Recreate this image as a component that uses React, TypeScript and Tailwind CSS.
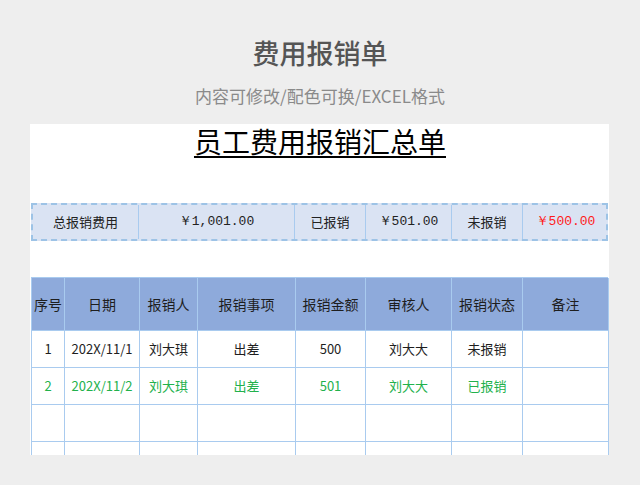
const COLS = 'grid grid-cols-[33px_75px_58px_98px_70px_86px_71px_86px]';

type Row = {
  no: string;
  date: string;
  person: string;
  item: string;
  amount: string;
  auditor: string;
  status: string;
  green?: boolean;
};

const HEAD = ['序号', '日期', '报销人', '报销事项', '报销金额', '审核人', '报销状态', '备注'];

const ROWS: Row[] = [
  { no: '1', date: '202X/11/1', person: '刘大琪', item: '出差', amount: '500', auditor: '刘大大', status: '未报销' },
  { no: '2', date: '202X/11/2', person: '刘大琪', item: '出差', amount: '501', auditor: '刘大大', status: '已报销', green: true },
];

function Cell({ children, className = '' }: { children?: React.ReactNode; className?: string }) {
  return (
    <div className={`flex items-center justify-center border-r border-b border-[#a9cbef] ${className}`}>
      {children}
    </div>
  );
}

export default function App() {
  return (
    <div
      className="flex h-[485px] w-[640px] flex-col items-center overflow-hidden bg-[#eeeeee]"
      style={{ fontFamily: '"Noto Sans CJK SC", "Noto Sans", sans-serif' }}
    >
      <h1 className="mt-[35px] text-[27px] leading-[36px] font-medium text-[#555555]">费用报销单</h1>
      <p className="mt-[14px] text-[17px] leading-[22px] text-[#8a8a8a]">内容可修改/配色可换/EXCEL格式</p>

      <div className="mt-[17px] ml-[30px] h-[331px] w-[579px] self-start overflow-hidden bg-white pl-px">
        {/* Sheet title */}
        <div className="flex h-[79px] justify-center pt-[1px]">
          <span className="text-[28px] leading-[32px] text-black underline decoration-[2px] underline-offset-[3px]">
            员工费用报销汇总单
          </span>
        </div>

        {/* Summary band */}
        <div className="grid h-[38px] w-[577px] grid-cols-[106px_156px_71px_86px_71px_85px] border-2 border-dashed border-[#9dc3e6] bg-[#dae3f3] text-[13px] text-[#222]">
          <div className="flex items-center justify-center border-r border-[#a9cbef]">总报销费用</div>
          <div className="flex items-center justify-center border-r border-[#a9cbef] font-['Liberation_Mono',monospace]">￥1,001.00</div>
          <div className="flex items-center justify-center border-r border-[#a9cbef]">已报销</div>
          <div className="flex items-center justify-center border-r border-[#a9cbef] font-['Liberation_Mono',monospace]">￥501.00</div>
          <div className="flex items-center justify-center border-r border-[#a9cbef]">未报销</div>
          <div className="flex items-center justify-center font-['Liberation_Mono',monospace] text-[#ff1a1a]">￥500.00</div>
        </div>

        {/* Detail table */}
        <div className="mt-[36px] w-[577px] border-t border-l border-[#a9cbef]">
          <div className={`${COLS} h-[53px] bg-[#8eaadb] text-[14px] text-[#1e1e1e]`}>
            {HEAD.map((h) => (
              <Cell key={h}>{h}</Cell>
            ))}
          </div>
          {ROWS.map((r) => (
            <div
              key={r.no}
              className={`${COLS} h-[37px] text-[13px] ${r.green ? 'text-[#22b14c]' : 'text-[#1e1e1e]'}`}
            >
              <Cell>{r.no}</Cell>
              <Cell>{r.date}</Cell>
              <Cell>{r.person}</Cell>
              <Cell>{r.item}</Cell>
              <Cell>{r.amount}</Cell>
              <Cell>{r.auditor}</Cell>
              <Cell>{r.status}</Cell>
              <Cell />
            </div>
          ))}
          {[0, 1].map((i) => (
            <div key={i} className={`${COLS} h-[37px]`}>
              {HEAD.map((h) => (
                <Cell key={h} />
              ))}
            </div>
          ))}
        </div>
      </div>
    </div>
  );
}
